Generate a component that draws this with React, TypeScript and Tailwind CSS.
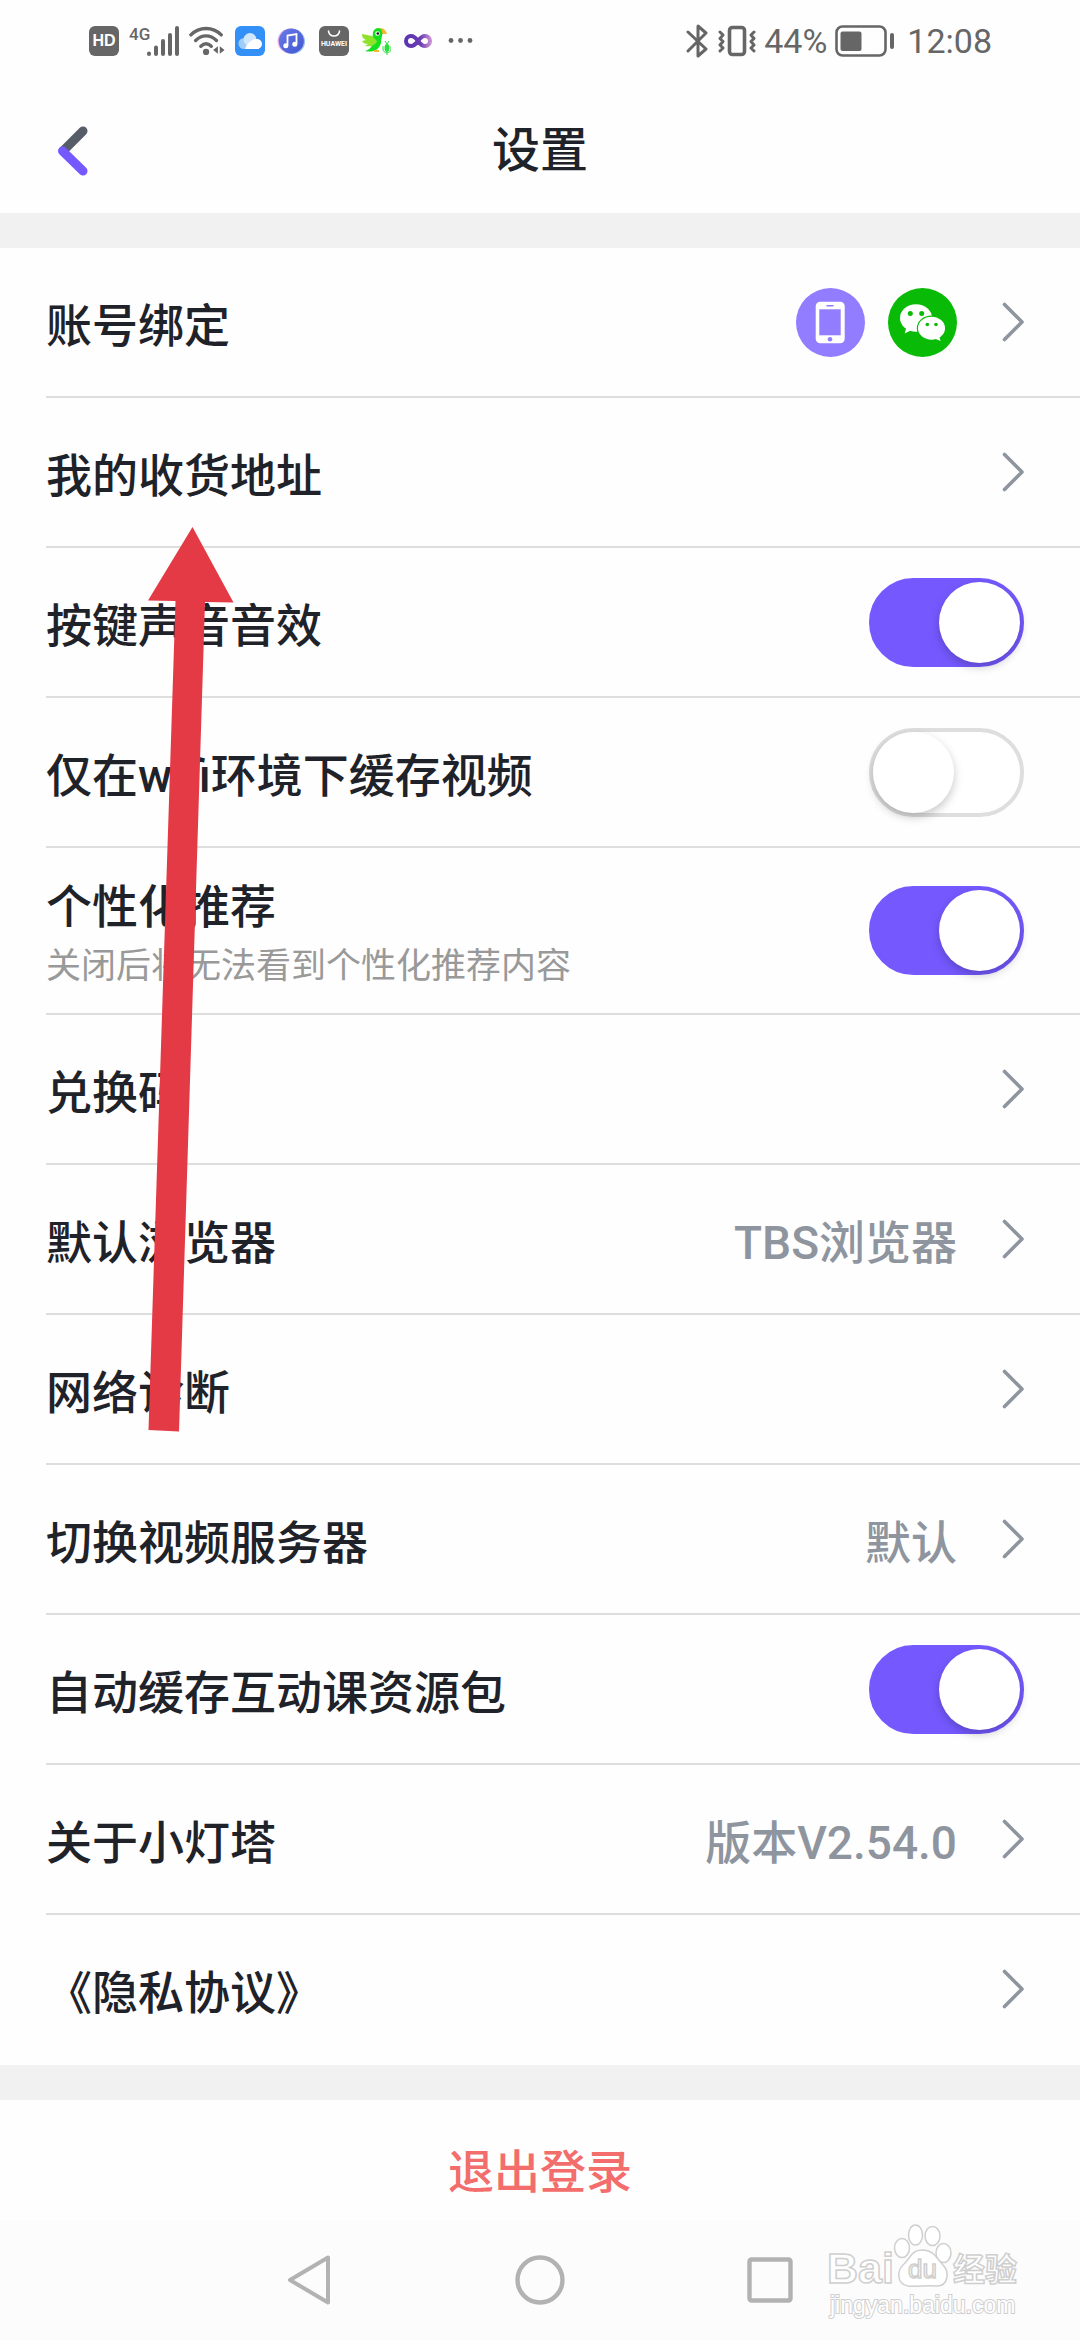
import React, { useState } from "react";

const FONT = "font-[Roboto,'Noto_Sans_CJK_SC',sans-serif]";

function HdIcon() {
  return (
    <span className="flex h-[30px] w-[30px] items-center justify-center rounded-md bg-[#666] font-['Liberation_Sans',sans-serif] text-[16px] leading-none font-bold text-white">
      HD
    </span>
  );
}

function SignalIcon() {
  return (
    <svg viewBox="0 0 50 32" className="h-8 w-[50px] text-[#666]" aria-label="4G">
      <text x="0" y="15" fontSize="17" fontWeight="500" fill="currentColor" fontFamily="Roboto, sans-serif">
        4G
      </text>
      <g stroke="currentColor" strokeWidth="4" strokeLinecap="round">
        <path d="M20 28.5v.5M27 22.500v6.500M34 16v13M41 10v19M48 3v26" />
      </g>
    </svg>
  );
}

function WifiIcon() {
  return (
    <svg viewBox="0 0 38 32" className="h-8 w-[36px] text-[#666]" aria-hidden="true">
      <g fill="none" stroke="currentColor" strokeWidth="3.6" strokeLinecap="round">
        <path d="M2 9.500C11 .5 25 .5 34 9.500" />
        <path d="M7 15.500C13.500 9 22.500 9 29 15.500" />
        <path d="M12.500 21.500C16 18.200 20 18.200 23.500 21.500" />
      </g>
      <circle cx="18" cy="27.500" r="3.300" fill="currentColor" />
      <path d="M30.500 21.500v8l-5-4zM32.500 21.500v8l5-4z" fill="currentColor" />
    </svg>
  );
}

function CloudIcon() {
  return (
    <svg viewBox="0 0 30 30" className="h-[30px] w-[30px]" aria-hidden="true">
      <rect width="30" height="30" rx="6" fill="#3390f7" />
      <circle cx="9" cy="17.500" r="5.500" fill="#9fcdfb" />
      <circle cx="15" cy="13.500" r="6.500" fill="#cfe6fd" />
      <circle cx="22" cy="18" r="5" fill="#fff" />
      <path d="M10 23c2-6 6-9 10-10 4 0 4 4 4 10z" fill="#fff" />
    </svg>
  );
}

function MusicIcon() {
  return (
    <svg viewBox="0 0 32 32" className="h-8 w-8" aria-hidden="true">
      <defs>
        <linearGradient id="disc" x1="0" y1="0" x2="1" y2="1">
          <stop offset="0" stopColor="#6a7be8" />
          <stop offset="1" stopColor="#4257cf" />
        </linearGradient>
      </defs>
      <circle cx="15" cy="16" r="12.500" fill="#e9b3ee" />
      <circle cx="17.500" cy="16.500" r="12.500" fill="#8fb8f5" />
      <circle cx="16.300" cy="16" r="12.500" fill="url(#disc)" />
      <path d="M12.500 20.500V10.500l9-1.500v10" fill="none" stroke="#fff" strokeWidth="1.800" />
      <circle cx="10.800" cy="20.800" r="2.500" fill="#fff" />
      <circle cx="19.800" cy="19.300" r="2.500" fill="#fff" />
    </svg>
  );
}

function HuaweiIcon() {
  return (
    <svg viewBox="0 0 34 30" className="h-[30px] w-[34px]" aria-hidden="true">
      <rect x="2" width="30" height="30" rx="6" fill="#666" />
      <path d="M11.500 5a5.500 5 0 0 0 11 0" fill="none" stroke="#fff" strokeWidth="1.600" strokeLinecap="round" />
      <text x="17" y="20" fontSize="7" fontWeight="700" fill="#fff" textAnchor="middle" fontFamily="Roboto, sans-serif">
        HUAWEI
      </text>
    </svg>
  );
}

function ParrotIcon() {
  return (
    <svg viewBox="0 0 30 30" className="h-[30px] w-[30px]" aria-hidden="true">
      <path d="M17 4c3-3 7-2 9 4l-6 0z" fill="#f6b433" />
      <path d="M12 6c2-5 8-5 9-1 1 5-1 7-1 12-2 7-8 10-16 8 4-1 6-3 7-6z" fill="#12e01c" />
      <path d="M1 8l10 2 5 5c-1 4-6 6-12 5l3-2c-3 0-5-1-6-3l4-1C2 13 1 11 1 8z" fill="#8fe22c" />
      <circle cx="16.500" cy="7.500" r="2.300" fill="#fff" />
      <circle cx="16.800" cy="7.500" r="1.300" fill="#111" />
      <path d="M13 24h5v2h-5z" fill="#f6b433" />
      <ellipse cx="26" cy="22" rx="2.500" ry="4" fill="#2be03a" />
      <path d="M24 15l2 3 2-3M22 20v3c0 5 8 5 8 0v-3M26 27v2" fill="none" stroke="#2be03a" strokeWidth="1" />
    </svg>
  );
}

function InfinityIcon() {
  return (
    <svg viewBox="0 0 34 30" className="h-[30px] w-[34px]" aria-hidden="true">
      <defs>
        <linearGradient id="loop" x1="0" y1="0" x2="1" y2="0">
          <stop offset="0" stopColor="#5b35b0" />
          <stop offset=".6" stopColor="#6a3bb4" />
          <stop offset="1" stopColor="#c58bd0" />
        </linearGradient>
      </defs>
      <path
        d="M17 15c-2.500-3.500-4.500-5-7-5a5 5 0 0 0 0 10c2.500 0 4.500-1.500 7-5s4.500-5 7-5a5 5 0 0 1 0 10c-2.500 0-4.500-1.500-7-5z"
        fill="none"
        stroke="url(#loop)"
        strokeWidth="4"
      />
    </svg>
  );
}

function MoreIcon() {
  return (
    <svg viewBox="0 0 30 30" className="h-[30px] w-[30px] text-[#666]" aria-hidden="true">
      <g fill="currentColor">
        <circle cx="6" cy="14.500" r="2.400" />
        <circle cx="15.500" cy="14.500" r="2.400" />
        <circle cx="25" cy="14.500" r="2.400" />
      </g>
    </svg>
  );
}

function BluetoothIcon() {
  return (
    <svg viewBox="0 0 22 34" className="h-[34px] w-[22px] text-[#666]" fill="none" stroke="currentColor" strokeWidth="3" strokeLinecap="round" strokeLinejoin="round" aria-hidden="true">
      <path d="M2 8l18 17-8 7V2l8 7L2 27" />
    </svg>
  );
}

function VibrateIcon() {
  return (
    <svg viewBox="0 0 38 32" className="h-8 w-[38px] text-[#666]" fill="none" stroke="currentColor" strokeLinejoin="round" strokeLinecap="round" aria-hidden="true">
      <rect x="11.500" y="2.500" width="15" height="27" rx="3" strokeWidth="3.600" />
      <path d="M2 7l3 3-3 3.500 3 3-3 3.500 3 3-3 3M36 7l-3 3 3 3.500-3 3 3 3.500-3 3 3 3" strokeWidth="3" />
    </svg>
  );
}

function BatteryIcon() {
  return (
    <svg viewBox="0 0 60 32" className="h-8 w-[60px] text-[#666]" aria-hidden="true">
      <rect x="1.500" y="1.500" width="49" height="29" rx="6" fill="none" stroke="currentColor" strokeWidth="2.600" />
      <rect x="5.500" y="6.500" width="21" height="19.500" rx="2" fill="currentColor" />
      <rect x="55" y="8" width="4" height="16" rx="2" fill="currentColor" />
    </svg>
  );
}

function StatusBar() {
  return (
    <div className="flex h-[81px] items-center justify-between pr-[88px] pl-[89px] text-[34px] leading-none text-[#666]">
      <div className="flex items-center gap-2.5">
        <HdIcon />
        <SignalIcon />
        <WifiIcon />
        <CloudIcon />
        <MusicIcon />
        <HuaweiIcon />
        <ParrotIcon />
        <InfinityIcon />
        <MoreIcon />
      </div>
      <div className="flex items-center">
        <BluetoothIcon />
        <span className="ml-2.5 flex">
          <VibrateIcon />
        </span>
        <span className="ml-2">44%</span>
        <span className="ml-2 flex">
          <BatteryIcon />
        </span>
        <span className="ml-3">12:08</span>
      </div>
    </div>
  );
}

function Header() {
  return (
    <header className="grid h-[132px] grid-cols-[1fr_auto_1fr] items-center pt-2">
      <button type="button" aria-label="返回" className="ml-[57px] flex w-8 items-center">
        <svg viewBox="0 0 32 50" className="h-[50px] w-8" fill="none" strokeWidth="9" strokeLinecap="round" aria-hidden="true">
          <path d="M26 5L7 24" stroke="#575d68" />
          <path d="M5.500 25L26 45" stroke="#7559ff" />
        </svg>
      </button>
      <h1 className="text-[48px] leading-[64px] font-medium text-[#1f2329]">设置</h1>
    </header>
  );
}

function Chevron() {
  return (
    <svg viewBox="0 0 22 40" className="ml-[45px] h-10 w-[22px] shrink-0" fill="none" stroke="#8f959e" strokeWidth="3.600" strokeLinecap="round" strokeLinejoin="round" aria-hidden="true">
      <path d="M2.500 2.500L20 20L2.500 37.500" />
    </svg>
  );
}

function PhoneBadge() {
  return (
    <svg viewBox="0 0 69 69" className="h-[69px] w-[69px]" role="img" aria-label="手机">
      <circle cx="34.500" cy="34.500" r="34.500" fill="#927cff" />
      <rect x="19.700" y="13.700" width="29" height="41.500" rx="4.500" fill="#fff" />
      <rect x="23.300" y="21.300" width="21.400" height="26" fill="#927cff" />
      <rect x="30.300" y="17" width="7.500" height="1.400" rx=".7" fill="#927cff" />
      <circle cx="34" cy="51.200" r="2.300" fill="#927cff" />
    </svg>
  );
}

function WechatBadge() {
  return (
    <svg viewBox="0 0 69 69" className="h-[69px] w-[69px]" role="img" aria-label="微信">
      <circle cx="34.500" cy="34.500" r="34.500" fill="#09bb07" />
      <ellipse cx="28" cy="30" rx="16" ry="13.700" fill="#fff" />
      <path d="M18.500 39l-1.800 6.500 7-3.500z" fill="#fff" />
      <ellipse cx="43.500" cy="40.200" rx="14.700" ry="12.700" fill="#09bb07" />
      <ellipse cx="43.500" cy="40.200" rx="13.500" ry="11.500" fill="#fff" />
      <path d="M51 47l1.500 6-6-2.500z" fill="#fff" />
      <g fill="#09bb07">
        <circle cx="22.300" cy="25.500" r="2.500" />
        <circle cx="33.700" cy="25.500" r="2.500" />
        <circle cx="39.300" cy="36.500" r="1.800" />
        <circle cx="48" cy="36.500" r="1.800" />
      </g>
    </svg>
  );
}

type Item = {
  label: string;
  note?: string;
  value?: string;
  badges?: boolean;
  toggle?: boolean;
};

const ITEMS: Item[] = [
  { label: "账号绑定", badges: true },
  { label: "我的收货地址" },
  { label: "按键声音音效", toggle: true },
  { label: "仅在wifi环境下缓存视频", toggle: false },
  { label: "个性化推荐", note: "关闭后将无法看到个性化推荐内容", toggle: true },
  { label: "兑换码" },
  { label: "默认浏览器", value: "TBS浏览器" },
  { label: "网络诊断" },
  { label: "切换视频服务器", value: "默认" },
  { label: "自动缓存互动课资源包", toggle: true },
  { label: "关于小灯塔", value: "版本V2.54.0" },
  { label: "《隐私协议》" },
];

function Switch({ initial }: { initial: boolean }) {
  const [on, setOn] = useState(initial);
  return (
    <input
      type="checkbox"
      role="switch"
      checked={on}
      onChange={() => setOn(!on)}
      className="h-[89px] w-[155px] shrink-0 appearance-none rounded-full border-4 border-[#dedede] bg-white before:block before:size-[81px] before:rounded-full before:bg-white before:shadow-[0_4px_10px_rgba(0,0,0,0.22)] before:content-[''] checked:border-[#7559ff] checked:bg-[#7559ff] checked:before:ml-auto"
    />
  );
}

function Row({ item }: { item: Item }) {
  const text = (
    <span className="flex flex-col pt-2 text-left">
      <span className="text-[46px] leading-[64px] font-medium text-[#1f2329]">{item.label}</span>
      {item.note && <span className="text-[35px] leading-[56px] text-[#999]">{item.note}</span>}
    </span>
  );
  const cls = item.note
    ? "flex h-[165px] w-full items-center justify-between pr-14"
    : "flex h-[148px] w-full items-center justify-between pr-14";

  if (item.toggle !== undefined) {
    return (
      <label className={cls}>
        {text}
        <Switch initial={item.toggle} />
      </label>
    );
  }
  return (
    <button type="button" className={cls}>
      {text}
      <span className="flex items-center">
        {item.badges && (
          <span className="flex gap-[23px]">
            <PhoneBadge />
            <WechatBadge />
          </span>
        )}
        {item.value && <span className="pt-2 text-[46px] leading-[64px] font-medium text-[#8f959e]">{item.value}</span>}
        <Chevron />
      </span>
    </button>
  );
}

function PointerArrow() {
  return (
    <svg viewBox="0 0 86 906" className="pointer-events-none absolute top-[526px] left-[148px] h-[906px] w-[86px]" aria-hidden="true">
      <path d="M44.500 1L85.500 76.500L57 76L31 905.500L.5 904L27.500 75L0 74.500z" fill="#e33a45" />
    </svg>
  );
}

function NavBar() {
  return (
    <nav className="relative grid h-[120px] grid-cols-3 bg-[#fcfcfc] px-[18%] text-[#b2b2b2]">
      <button type="button" aria-label="返回" className="flex items-center justify-center">
        <svg viewBox="0 0 50 50" className="size-[50px]" fill="none" stroke="currentColor" strokeWidth="4" strokeLinejoin="round" aria-hidden="true">
          <path d="M43 2.500v45L5 25z" />
        </svg>
      </button>
      <button type="button" aria-label="主页" className="flex items-center justify-center">
        <svg viewBox="0 0 50 50" className="size-[50px]" fill="none" stroke="currentColor" strokeWidth="4.400" aria-hidden="true">
          <circle cx="25" cy="25" r="22.500" />
        </svg>
      </button>
      <button type="button" aria-label="最近任务" className="flex items-center justify-center">
        <svg viewBox="0 0 50 50" className="size-[50px]" fill="none" stroke="currentColor" strokeWidth="4.400" aria-hidden="true">
          <rect x="4.500" y="4.500" width="41" height="41" rx="2" />
        </svg>
      </button>
      <Watermark />
    </nav>
  );
}

function Watermark() {
  return (
    <svg viewBox="0 0 200 100" className="pointer-events-none absolute right-[55px] bottom-[18px] h-[100px] w-[200px]" fill="#fff" stroke="#cfcfcf" strokeWidth="1.500" aria-label="Baidu 经验">
      <text x="2" y="61" fontSize="43" fontWeight="700" fontFamily="'Liberation Sans', sans-serif">
        Bai
      </text>
      <ellipse cx="77" cy="26" rx="7.500" ry="9.500" />
      <ellipse cx="90.500" cy="13" rx="7" ry="10" />
      <ellipse cx="107.500" cy="14" rx="7.500" ry="9.500" />
      <ellipse cx="118.500" cy="31" rx="7.500" ry="9.500" />
      <path d="M97 28c-11 0-12 9-18 14-7 6-8 20 4 22 7 1 20-1 28 0 12 1 14-14 7-21-6-6-9-15-21-15z" />
      <text x="83" y="56" fontSize="26" fontWeight="400" fontFamily="'Liberation Sans', sans-serif">
        du
      </text>
      <text x="128" y="59" fontSize="32" fontWeight="700" fontFamily="'Noto Sans CJK SC', sans-serif">
        经验
      </text>
      <text x="5" y="91" fontSize="23" fontFamily="'Liberation Sans', sans-serif" strokeWidth="2" paintOrder="stroke">
        jingyan.baidu.com
      </text>
    </svg>
  );
}

export default function App() {
  return (
    <div className={`relative min-h-screen w-full bg-[#fefefe] ${FONT}`}>
      <StatusBar />
      <Header />
      <div className="h-[35px] bg-[#f1f1f1]" />
      <ul className="pl-[46px]">
        {ITEMS.map((item) => (
          <li key={item.label} className="border-b-2 border-[#dedede] last:border-transparent">
            <Row item={item} />
          </li>
        ))}
      </ul>
      <div className="h-[35px] bg-[#f1f1f1]" />
      <button type="button" className="flex h-[120px] w-full items-center justify-center pt-6 text-[46px] leading-[64px] font-medium text-[#f26d6b]">
        退出登录
      </button>
      <NavBar />
      <PointerArrow />
    </div>
  );
}
